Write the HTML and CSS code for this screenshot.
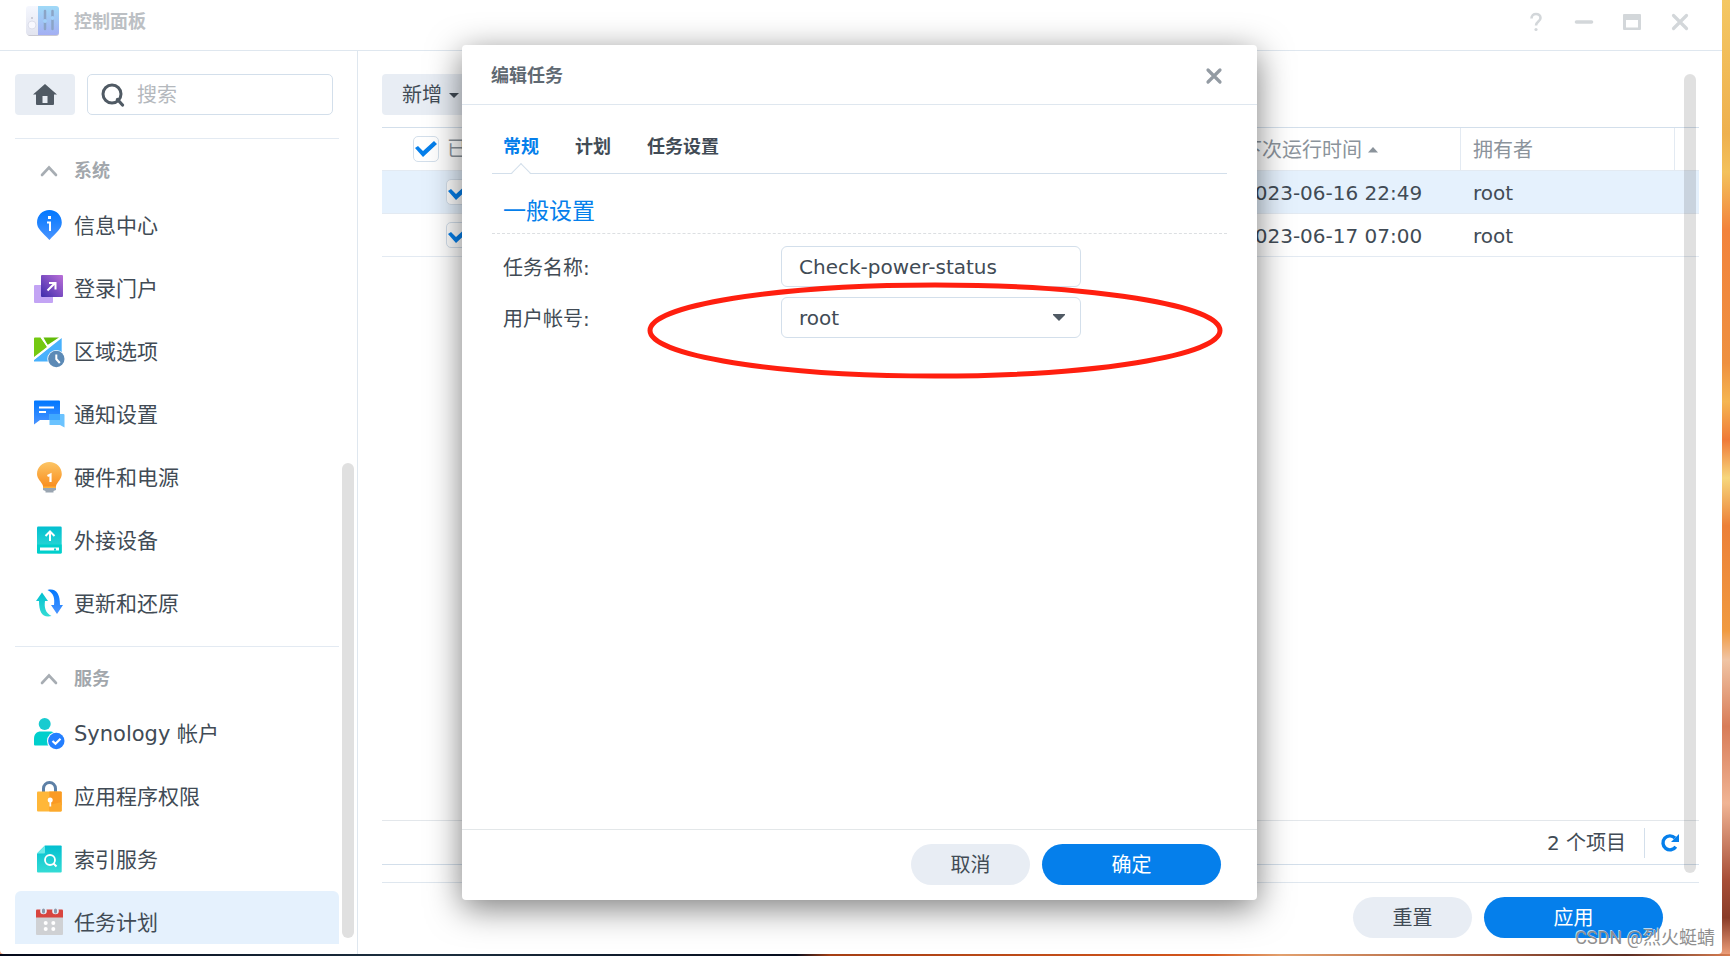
FILE: index.html
```html
<!DOCTYPE html>
<html lang="zh-CN">
<head>
<meta charset="utf-8">
<title>控制面板</title>
<link rel="stylesheet" href="styles.css">
</head>
<body>
<div class="window">
  <header class="titlebar">
    <svg class="app-icon" viewBox="0 0 36 32" aria-hidden="true">
      <defs>
        <linearGradient id="cpBlue" x1="0" y1="0" x2="0" y2="1"><stop offset="0" stop-color="#9fd9f7"/><stop offset="1" stop-color="#a3aff3"/></linearGradient>
        <linearGradient id="cpGrey" x1="0" y1="0" x2="0" y2="1"><stop offset="0" stop-color="#f5f7fe"/><stop offset="1" stop-color="#e2e4ef"/></linearGradient>
      </defs>
      <rect x="2" y="2" width="32" height="28" rx="3" fill="#c9c9d2"/>
      <path d="M13 0h18a3 3 0 0 1 3 3v23a3 3 0 0 1-3 3H13z" fill="url(#cpBlue)"/>
      <path d="M4 0h9v29H4a3 3 0 0 1-3-3V3a3 3 0 0 1 3-3z" fill="url(#cpGrey)"/>
      <circle cx="7" cy="19" r="4" fill="#f8f8fe" stroke="#dcdeea"/>
      <circle cx="7" cy="12" r="1" fill="#bfc1cc"/>
      <path d="M20 5v18M27.500 5v18" stroke="#8ba4c6" stroke-width="2.500" stroke-linecap="round"/>
      <circle cx="20" cy="15" r="2" fill="#a2d0fa"/><circle cx="27.500" cy="12" r="2" fill="#a2d0fa"/>
    </svg>
    <h1 class="app-title">控制面板</h1>
    <div class="win-controls">
      <button class="icon-btn" aria-label="帮助"><svg viewBox="0 0 20 20"><path d="M5.500 6.500C5.500 3.500 7.500 2 10 2s4.500 1.500 4.500 4c0 3.500-4.500 3.600-4.500 7.500" fill="none" stroke="currentColor" stroke-width="2.600"/><circle cx="10" cy="17.500" r="1.600" fill="currentColor"/></svg></button>
      <button class="icon-btn" aria-label="最小化"><svg viewBox="0 0 20 20"><path d="M2.500 10h15" stroke="currentColor" stroke-width="3.600" stroke-linecap="round"/></svg></button>
      <button class="icon-btn" aria-label="最大化"><svg viewBox="0 0 20 20"><path fill="currentColor" fill-rule="evenodd" d="M2 2h16a1 1 0 0 1 1 1v14a1 1 0 0 1-1 1H2a1 1 0 0 1-1-1V3a1 1 0 0 1 1-1zm2 6v7.500h12V8z"/></svg></button>
      <button class="icon-btn" aria-label="关闭"><svg viewBox="0 0 20 20"><path d="M3.500 3.500l13 13M16.500 3.500l-13 13" stroke="currentColor" stroke-width="3.200" stroke-linecap="round"/></svg></button>
    </div>
  </header>

  <div class="body">
    <aside class="sidebar">
      <div class="side-content">
        <div class="side-top">
          <button class="home-btn" aria-label="主页"><svg viewBox="0 0 24 22"><path d="M12 0L0 10.500h3V20a1 1 0 0 0 1 1h16a1 1 0 0 0 1-1v-9.500h3zM9.500 12h5v7h-5z" fill="#505a64" fill-rule="evenodd"/></svg></button>
          <label class="search">
            <svg viewBox="0 0 24 24"><circle cx="11" cy="11" r="9" fill="none" stroke="#505a64" stroke-width="3"/><path d="M16.500 16.500l5 5.500" stroke="#505a64" stroke-width="3.200" stroke-linecap="round"/></svg>
            <input type="search" placeholder="搜索" aria-label="搜索">
          </label>
        </div>
        <nav class="nav">
          <section class="nav-group">
            <h2 class="group-title"><svg viewBox="0 0 18 12"><path d="M2 10l7-7.500 7 7.500" fill="none" stroke="#a7adb3" stroke-width="2.600" stroke-linecap="round"/></svg>系统</h2>
            <a class="nav-item" href="#info"><svg viewBox="0 0 32 32">
              <defs><linearGradient id="gb" x1="0" y1="0" x2="0" y2="1"><stop offset="0" stop-color="#0077ff"/><stop offset="1" stop-color="#4a94ff"/></linearGradient></defs>
              <path d="M16.400 0C9.500 0 4 5.500 4 12.400c0 6.600 5.500 9.600 12.400 17.600 6.900-8 12.400-11 12.400-17.600C28.800 5.500 23.300 0 16.400 0z" fill="url(#gb)"/>
              <path d="M15 6h3v3h-3zM14 11.500h4V21h-2v-7.500h-2z" fill="#fff"/></svg>信息中心</a>
            <a class="nav-item" href="#portal"><svg viewBox="0 0 32 32">
              <defs><linearGradient id="gp" x1="0" y1="1" x2="1" y2="0"><stop offset="0" stop-color="#3d2bab"/><stop offset="1" stop-color="#bb70d8"/></linearGradient></defs>
              <rect x="1" y="12" width="19" height="18" rx="1" fill="#c3a4f4"/>
              <rect x="8" y="2" width="22" height="22" rx="1" fill="url(#gp)"/>
              <path d="M14.500 17.500l7.500-7.500M16 10h6.500v6.500" fill="none" stroke="#fff" stroke-width="2"/></svg>登录门户</a>
            <a class="nav-item" href="#region"><svg viewBox="0 0 32 32">
              <path d="M1 2.500a1 1 0 0 1 1-1h6l6 9.500-13 10z" fill="#74c911"/>
              <path d="M10.500 1.500H26L14.500 9z" fill="#62bb08"/>
              <path d="M28.700 2v23.500H1V24z" fill="#48b1fd"/>
              <path d="M1 23L28 1M8 1l6.500 9" stroke="#fff" stroke-width="1.500"/>
              <circle cx="23.300" cy="23" r="9" fill="#fff"/><circle cx="23.300" cy="23" r="8.200" fill="#5c8ab6"/>
              <path d="M23.300 18.500V23l3.500 4" fill="none" stroke="#fff" stroke-width="2"/></svg>区域选项</a>
            <a class="nav-item" href="#notify"><svg viewBox="0 0 32 32">
              <path d="M2 1.500h24a1 1 0 0 1 1 1V21H7l-6 4.500v-23a1 1 0 0 1 1-1z" fill="url(#gb)"/>
              <path d="M16.500 15h14a1 1 0 0 1 1 1v12.500L27 26H16.500z" fill="#6bc3ff"/><path d="M16.500 15H27v6H16.500z" fill="#3fa8ff"/>
              <path d="M6 8.500h15M6 13h7" stroke="#fff" stroke-width="1.800"/></svg>通知设置</a>
            <a class="nav-item" href="#power"><svg viewBox="0 0 32 32">
              <defs><linearGradient id="go" x1="0" y1="0" x2="0" y2="1"><stop offset="0" stop-color="#fcc565"/><stop offset="1" stop-color="#f98b1b"/></linearGradient></defs>
              <path d="M10 26h13v2l-2.500 1v1.500h-8V29L10 28z" fill="#9aa5b1"/>
              <path d="M16.400 0C9.500 0 4 5.200 4 12c0 5 5 8 6 12v2h13v-2c1-4 5.800-7 5.800-12 0-6.800-5.500-12-12.400-12z" fill="url(#go)"/>
              <path d="M10 24.500h13V26H10z" fill="#ffb13b"/><path d="M14.500 14l3-1.500V20" fill="none" stroke="#fff" stroke-width="2.200"/></svg>硬件和电源</a>
            <a class="nav-item" href="#external"><svg viewBox="0 0 32 32">
              <defs><linearGradient id="gt" x1="0" y1="0" x2="0" y2="1"><stop offset="0" stop-color="#02bfd0"/><stop offset="1" stop-color="#34dcd5"/></linearGradient></defs>
              <rect x="4" y="1.500" width="24.700" height="27" rx="1.200" fill="url(#gt)"/><path d="M4 19.500h24.700v8a1 1 0 0 1-1 1H5a1 1 0 0 1-1-1z" fill="#00cfcc"/>
              <path d="M17 16V7M12.500 11L17 6.500l4.500 4.500" fill="none" stroke="#fff" stroke-width="2"/><path d="M7 22.500h19V25.500H7z" fill="#fff"/><path d="M21 23.500h2v2h-2z" fill="#00cfcc"/></svg>外接设备</a>
            <a class="nav-item" href="#update"><svg viewBox="0 0 32 32">
              <path d="M9 4.500L15 13h-3c-1 6.500.5 12 6.500 15C9.500 30 6 24.500 6 13H3z" fill="url(#gt)"/>
              <path d="M14.500 2C23 0 27 5.500 27 17h3l-6 9-6-9h3c1-7-.5-12-6.500-15z" fill="url(#gb)"/></svg>更新和还原</a>
          </section>
          <section class="nav-group">
            <h2 class="group-title"><svg viewBox="0 0 18 12"><path d="M2 10l7-7.500 7 7.500" fill="none" stroke="#a7adb3" stroke-width="2.600" stroke-linecap="round"/></svg>服务</h2>
            <a class="nav-item" href="#account"><svg viewBox="0 0 32 32">
              <circle cx="11.700" cy="6" r="6" fill="#18cbd0"/><path d="M8 13.500h10c3 0 4 3 4 6v8H2a1 1 0 0 1-1-1V21c0-5 2.500-7.500 7-7.500z" fill="#00cfcc"/>
              <circle cx="23.300" cy="23" r="9.300" fill="#fff"/><circle cx="23.300" cy="23" r="8.200" fill="#247fff"/>
              <path d="M19.500 23l3 2.800 5-5" fill="none" stroke="#fff" stroke-width="2.200"/></svg>Synology 帐户</a>
            <a class="nav-item" href="#privilege"><svg viewBox="0 0 32 32">
              <path d="M10.500 12V7.500a6 6 0 0 1 12 0V12" fill="none" stroke="#5d80a6" stroke-width="3"/>
              <rect x="4" y="10.500" width="24.700" height="20" rx="1" fill="#ffb739"/><path d="M16.400 10.500h11.300a1 1 0 0 1 1 1V24L16.400 30z" fill="#fa9a24"/><path d="M16.400 24l12.300-3v8.500a1 1 0 0 1-1 1H16.400z" fill="#fca82d"/>
              <circle cx="17.200" cy="19" r="2.500" fill="#fff"/><path d="M16.400 19h1.800v6.500h-1.800z" fill="#fff"/></svg>应用程序权限</a>
            <a class="nav-item" href="#index"><svg viewBox="0 0 32 32">
              <path d="M12 1.500h15.700a1 1 0 0 1 1 1V27.500a1 1 0 0 1-1 1H5a1 1 0 0 1-1-1V9.500z" fill="url(#gt)"/><path d="M12 1.500v7a1 1 0 0 1-1 1H4z" fill="#6beae8"/>
              <circle cx="17" cy="16" r="5" fill="none" stroke="#fff" stroke-width="1.800"/><path d="M20.500 19.500l3 3" stroke="#fff" stroke-width="2"/></svg>索引服务</a>
            <a class="nav-item active" href="#tasks" aria-current="page"><svg viewBox="0 0 32 32">
              <path d="M3 9h27v18a1 1 0 0 1-1 1H4a1 1 0 0 1-1-1z" fill="#cfd1d4"/><path d="M4 2.500h25a1 1 0 0 1 1 1v7H3v-7a1 1 0 0 1 1-1z" fill="#d8453f"/>
              <circle cx="10.500" cy="4" r="3.300" fill="#e6f1fc"/><circle cx="22.500" cy="4" r="3.300" fill="#e6f1fc"/>
              <rect x="9" y="1.500" width="3" height="5" rx="1.500" fill="#8c99ab"/><rect x="21" y="1.500" width="3" height="5" rx="1.500" fill="#8c99ab"/>
              <g fill="#fff"><circle cx="12.700" cy="16" r="2"/><circle cx="20.300" cy="16" r="2"/><circle cx="12.700" cy="22" r="2"/><circle cx="20.300" cy="22" r="2"/></g></svg>任务计划</a>
          </section>
        </nav>
      </div>
      <div class="side-track"><div class="thumb"></div></div>
    </aside>

    <main class="main">
      <div class="list-panel">
        <div class="toolbar"><button class="add-btn">新增<svg viewBox="0 0 10 6"><path d="M0 1h10L5 6z" fill="currentColor"/></svg></button></div>
        <table class="tasks">
          <colgroup><col class="c-on"><col><col class="c-time"><col class="c-owner"><col class="c-end"></colgroup>
          <thead><tr>
            <th><label class="check-head"><input type="checkbox" checked>已启动</label></th><th></th>
            <th>下次运行时间<svg class="sort" viewBox="0 0 10 10"><path d="M0 6.500h10L5 1z" fill="#8b939b"/></svg></th>
            <th class="split">拥有者</th><th class="split"></th>
          </tr></thead>
          <tbody>
            <tr class="selected"><td><input type="checkbox" class="row-check" checked aria-label="启动任务"></td><td></td><td>2023-06-16 22:49</td><td>root</td><td></td></tr>
            <tr><td><input type="checkbox" class="row-check" checked aria-label="启动任务"></td><td></td><td>2023-06-17 07:00</td><td>root</td><td></td></tr>
          </tbody>
        </table>
        <div class="status"><span class="count">2 个项目</span>
          <button class="refresh" aria-label="刷新"><svg viewBox="0 0 20 20"><path d="M15.800 13.800A7 7 0 1 1 15 5" fill="none" stroke="#057feb" stroke-width="3.400"/><path d="M19 1v8h-8z" fill="#057feb"/></svg></button>
        </div>
        <div class="main-thumb"></div>
      </div>
      <footer class="actions"><button class="btn">重置</button><button class="btn primary">应用</button></footer>
    </main>
  </div>

  <div class="overlay">
    <section class="dialog" role="dialog" aria-labelledby="dlg-title">
      <header class="dlg-head"><h2 id="dlg-title">编辑任务</h2>
        <button class="icon-btn dark" aria-label="关闭"><svg viewBox="0 0 20 20"><path d="M4 4l12 12M16 4l-12 12" stroke="currentColor" stroke-width="3.200" stroke-linecap="round"/></svg></button></header>
      <div class="dlg-body">
        <div class="tabs" role="tablist">
          <button class="tab current" role="tab" aria-selected="true">常规</button>
          <button class="tab" role="tab">计划</button>
          <button class="tab" role="tab">任务设置</button>
        </div>
        <h3 class="set-title">一般设置</h3>
        <div class="field"><label for="task-name">任务名称:</label><div class="control"><input id="task-name" type="text" value="Check-power-status"></div></div>
        <div class="field"><label for="task-user">用户帐号:</label><div class="control"><select id="task-user"><option>root</option></select><svg class="arrow" viewBox="0 0 12 7"><path d="M0 0h12v1L6 7 0 1z" fill="#505a64"/></svg></div></div>
        <svg class="marker" viewBox="0 0 576 97" aria-hidden="true"><ellipse cx="288" cy="48.500" rx="285" ry="45.500" fill="none" stroke="#ff1f0f" stroke-width="5"/></svg>
      </div>
      <footer class="dlg-foot"><button class="btn">取消</button><button class="btn primary">确定</button></footer>
    </section>
  </div>
</div>
<div class="watermark">CSDN @烈火蜓蜻</div>
</body>
</html>
```

FILE: styles.css
```css
* { box-sizing: border-box; }
body {
  margin: 0;
  height: 100vh;
  padding: 0 8px 2px 0;
  position: relative;
  overflow: hidden;
  font: 20px/28px "DejaVu Sans", "Noto Sans CJK SC", sans-serif;
  color: #414b55;
  background:
    linear-gradient(90deg, #04091a, #1d3040 24%, #060d1e 46%, #a63f14 48%, #d4561c 70%, #e2a06e 74%, #a65a3c 86%, #5a2c22 94%, #d67c50) bottom / 100% 2px no-repeat,
    linear-gradient(180deg, #f4c763, #eeb04e 14%, #f3c15c 18%, #f2833c 24%, #ee9040 38%, #f5b552 42%, #ef7a38 46%, #f6d67c 50%, #ec8038 55%, #f09a40 66%, #f0c4a4 69%, #d87c58 76%, #f0b494 84%, #a84f38 92%, #8a3c28 96%, #f0a27c);
}
button, input, select { font: inherit; color: inherit; margin: 0; }
button { border: 0; padding: 0; cursor: pointer; }
h1, h2, h3 { margin: 0; }
svg { display: block; flex: none; }

.window { position: relative; height: 100%; display: flex; flex-direction: column; background: #fff; border-radius: 0 0 4px 4px; overflow: hidden; }
.titlebar { flex: none; height: 51px; padding: 0 32px 7px 25px; display: flex; align-items: center; border-bottom: 1px solid #dfe7ef; }
.app-icon { width: 36px; height: 32px; }
.app-title { margin-left: 13px; font-size: 18px; line-height: 24px; color: #bcc0c4; }
.win-controls { margin-left: auto; display: flex; gap: 28px; }
.icon-btn { width: 20px; height: 20px; background: none; color: #d3d7da; }
.icon-btn svg { width: 20px; height: 20px; }
.icon-btn.dark { color: #939ba3; }

.body { flex: 1; min-height: 0; display: flex; }
.sidebar { flex: none; width: 358px; padding: 23px 3px 10px 15px; border-right: 1px solid #dfe7ef; display: flex; gap: 3px; }
.side-content { flex: 1; min-width: 0; display: flex; flex-direction: column; min-height: 0; }
.side-top { display: flex; gap: 12px; padding: 0 6px 23px 0; border-bottom: 1px solid #e3eaf2; }
.home-btn { flex: none; width: 60px; height: 41px; border-radius: 4px; background: #e8edf4; display: grid; place-items: center; }
.home-btn svg { width: 24px; height: 22px; }
.search { flex: 1; min-width: 0; height: 41px; padding: 0 13px; display: flex; align-items: center; gap: 12px; border: 1px solid #d3dfeb; border-radius: 5px; }
.search svg { width: 24px; height: 24px; }
.search input { flex: 1; min-width: 0; width: 100%; border: 0; padding: 0; background: none; outline: 0; }
.search input::placeholder { color: #b4b8bd; }
.nav { flex: 1; min-height: 0; overflow: hidden; }
.nav-group { padding-bottom: 11px; }
.nav-group + .nav-group { border-top: 1px solid #e3eaf2; }
.group-title { height: 55px; padding: 8px 0 0 25px; display: flex; align-items: center; gap: 16px; font-size: 18px; color: #a2a7ac; }
.group-title svg { width: 18px; height: 12px; }
.nav-item { height: 63px; padding-left: 18px; display: flex; align-items: center; gap: 9px; font-size: 21px; color: inherit; text-decoration: none; border-radius: 6px; }
.nav-item svg { width: 32px; height: 32px; }
.nav-item.active { background: #e5f1fd; }
.side-track { flex: none; width: 12px; display: flex; flex-direction: column; justify-content: flex-end; padding-bottom: 6px; }
.thumb { height: 55%; border-radius: 6px; background: #e0e0e0; }

.main { flex: 1; min-width: 0; padding: 23px 23px 16px 24px; display: flex; flex-direction: column; }
.list-panel { position: relative; flex: 1; display: flex; flex-direction: column; margin-bottom: 17px; border-bottom: 1px solid #d3dfeb; }
.toolbar { padding-bottom: 12px; }
.add-btn { height: 41px; padding: 0 20px; display: flex; align-items: center; gap: 7px; border-radius: 4px; background: #e8edf4; }
.add-btn svg { width: 10px; height: 6px; }
.tasks { width: 100%; table-layout: fixed; border-collapse: separate; border-spacing: 0; border-top: 1px solid #d3dfeb; }
.c-on { width: 150px; }
.c-time { width: 230px; }
.c-owner { width: 214px; }
.c-end { width: 25px; }
.tasks th, .tasks td { height: 43px; padding: 1px 12px 0; text-align: left; white-space: nowrap; border-bottom: 1px solid #e3eaf2; }
.tasks td:nth-child(4) { padding-left: 13px; }
.tasks th { font-weight: 400; color: #8b939b; }
.tasks th:first-child, .tasks td:first-child { padding: 0 0 0 31px; }
.tasks .split { border-left: 1px solid #e3eaf2; }
.check-head { display: flex; align-items: center; gap: 8px; }
.sort { display: inline-block; width: 10px; height: 10px; margin-left: 6px; vertical-align: middle; }
.selected { background: #e5f1fd; }
input[type="checkbox"] { appearance: none; width: 26px; height: 26px; border: 1px solid #d3dfeb; border-radius: 5px; display: grid; place-items: center; background: #fff; }
input[type="checkbox"]::after { content: ""; width: 22px; height: 16px; background: #057feb; clip-path: polygon(0 7px, 3px 5px, 8px 10px, 19px 0, 22px 3px, 8px 16px); }
.tasks .row-check { margin-left: 33px; }
.status { margin-top: auto; height: 44px; display: flex; align-items: center; justify-content: flex-end; gap: 18px; padding-right: 19px; border-top: 1px solid #e3e7eb; }
.refresh { height: 30px; padding-left: 15px; border-left: 1px solid #d3dfeb; background: none; }
.refresh svg { width: 20px; height: 20px; }
.main-thumb { position: absolute; top: 0; bottom: -9px; right: 3px; width: 12px; border-radius: 6px; background: rgba(0, 0, 0, 0.12); }
.actions { display: flex; justify-content: flex-end; gap: 12px; padding: 14px 36px 0 0; border-top: 1px solid #dfe7ef; }
.btn { width: 119px; height: 41px; border-radius: 21px; background: #e8edf4; }
.btn.primary { width: 179px; background: #057feb; color: #fff; }

.overlay { position: absolute; inset: 0; padding: 45px 3px 54px 0; display: flex; justify-content: center; }
.dialog { width: 795px; display: flex; flex-direction: column; background: #fff; border-radius: 4px; box-shadow: 0 8px 34px rgba(0, 0, 0, 0.52); }
.dlg-head { height: 60px; padding: 2px 33px 0 29px; display: flex; align-items: center; justify-content: space-between; border-bottom: 1px solid #dfe7ef; }
.dlg-head h2 { font-size: 18px; color: #5f6972; }
.dlg-body { position: relative; flex: 1; padding: 18px 30px 0; }
.tabs { height: 51px; padding: 9px 11px 0; display: flex; align-items: flex-start; gap: 36px; border-bottom: 1px solid #d3dfeb; }
.tab { position: relative; height: 41px; padding-bottom: 11px; font-size: 18px; font-weight: 700; background: none; }
.tab.current { color: #057feb; }
.tab.current::after { content: ""; position: absolute; left: 50%; bottom: -7px; width: 13px; height: 13px; margin-left: -7px; background: linear-gradient(135deg, #fff 50%, transparent 50%); border: solid #d3dfeb; border-width: 1px 0 0 1px; transform: rotate(45deg); }
.set-title { height: 60px; padding: 21px 11px 0; font-size: 23px; line-height: 32px; font-weight: 400; color: #057feb; border-bottom: 1px dashed #dcdfe2; }
.field { display: flex; align-items: center; margin: 12px 0 -2px; padding: 0 146px 0 11px; }
.field label { flex: 1; padding-top: 2px; }
.control { position: relative; width: 300px; }
.control input, .control select { display: block; width: 100%; height: 41px; padding: 0 17px; border: 1px solid #d3dfeb; border-radius: 6px; background: #fff; appearance: none; outline: 0; }
.arrow { position: absolute; right: 16px; top: 17px; width: 12px; height: 7px; pointer-events: none; }
.marker { position: absolute; left: 185px; top: 177px; width: 576px; height: 97px; pointer-events: none; }
.dlg-foot { height: 71px; padding: 14px 36px 0; display: flex; justify-content: flex-end; gap: 12px; border-top: 1px solid #e3e7e9; }

.watermark { position: absolute; right: 15px; bottom: 5px; font: 18px/26px Roboto, "Noto Sans CJK SC", sans-serif; color: #8f8f8f; text-shadow: -1px -1px 0 rgba(255, 255, 255, 0.7); }
```
